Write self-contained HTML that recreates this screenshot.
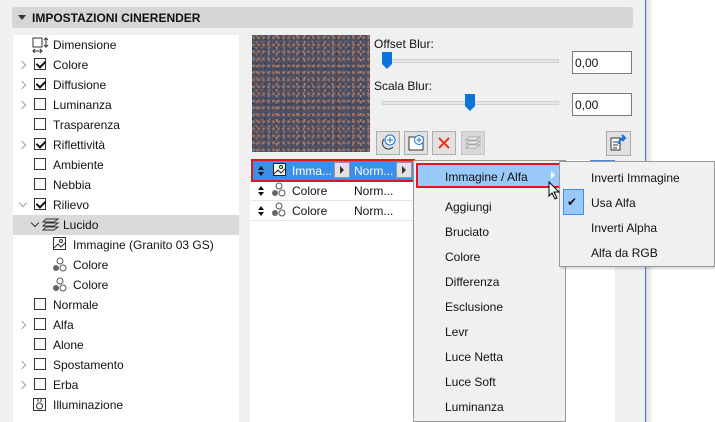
<!DOCTYPE html>
<html><head><meta charset="utf-8"><style>
*{box-sizing:border-box;margin:0;padding:0}
body{width:715px;height:422px;overflow:hidden;background:#f0f0f0;font-family:"Liberation Sans",sans-serif;font-size:12px;color:#111;position:relative}
.a{position:absolute}
.t{position:absolute;white-space:nowrap;line-height:14px}
.cb{position:absolute;width:12px;height:12px;border:1px solid #333;background:#fff}
.cb.on::after{content:"";position:absolute;left:3px;top:0px;width:4px;height:7px;border:solid #111;border-width:0 2px 2px 0;transform:rotate(45deg)}
.chev{position:absolute;width:6px;height:6px;border:solid #a0a0a0;border-width:1.5px 1.5px 0 0;transform:rotate(45deg)}
.dn{transform:rotate(135deg)}
.mi{position:absolute;left:445px;font-size:12px}
.srt{position:absolute;width:6px;height:10px}
.srt::before{content:"";position:absolute;left:0;top:0;border-left:3px solid transparent;border-right:3px solid transparent;border-bottom:4px solid #111}
.srt::after{content:"";position:absolute;left:0;top:6px;border-left:3px solid transparent;border-right:3px solid transparent;border-top:4px solid #111}
.srt.w::before{border-bottom-color:#fff}.srt.w::after{border-top-color:#fff}
</style></head><body>
<div class="a" style="left:645px;top:0;width:1px;height:422px;background:#3a7bd5"></div>
<div class="a" style="left:646px;top:0;width:69px;height:422px;background:#fff"></div>
<div class="a" style="left:646px;top:0;width:8px;height:422px;background:linear-gradient(90deg,#ddd,#fff)"></div>
<div class="a" style="left:12px;top:7px;width:621px;height:21px;background:#d6d6d6;border-radius:3px"></div>
<div class="a" style="left:18px;top:15px;border-left:4px solid transparent;border-right:4px solid transparent;border-top:5px solid #333"></div>
<div class="t" style="left:32px;top:11px;font-weight:bold;font-size:12px">IMPOSTAZIONI CINERENDER</div>
<div class="a" style="left:13px;top:35px;width:226px;height:387px;background:#fff"></div>
<div class="a" style="left:13px;top:215px;width:226px;height:20px;background:#dadada"></div>
<svg class="a" style="left:32px;top:37px" width="18" height="16"><rect x="1" y="1" width="9" height="9" fill="none" stroke="#333"/><path d="M14 1v9M12 3l2-2 2 2M12 8l2 2 2-2M1 14h9M3 12l-2 2 2 2M8 12l2 2-2 2" stroke="#333" fill="none"/></svg>
<div class="t" style="left:53px;top:38px">Dimensione</div>
<div class="chev" style="left:19px;top:62px"></div><div class="cb on" style="left:34px;top:58px"></div><div class="t" style="left:53px;top:58px">Colore</div>
<div class="chev" style="left:19px;top:82px"></div><div class="cb on" style="left:34px;top:78px"></div><div class="t" style="left:53px;top:78px">Diffusione</div>
<div class="chev" style="left:19px;top:102px"></div><div class="cb" style="left:34px;top:98px"></div><div class="t" style="left:53px;top:98px">Luminanza</div>
<div class="cb" style="left:34px;top:118px"></div><div class="t" style="left:53px;top:118px">Trasparenza</div>
<div class="chev" style="left:19px;top:142px"></div><div class="cb on" style="left:34px;top:138px"></div><div class="t" style="left:53px;top:138px">Riflettività</div>
<div class="cb" style="left:34px;top:158px"></div><div class="t" style="left:53px;top:158px">Ambiente</div>
<div class="cb" style="left:34px;top:178px"></div><div class="t" style="left:53px;top:178px">Nebbia</div>
<div class="chev dn" style="left:20px;top:200px"></div><div class="cb on" style="left:34px;top:198px"></div><div class="t" style="left:53px;top:198px">Rilievo</div>
<div class="chev dn" style="left:32px;top:220px;border-color:#333"></div>
<svg class="a" style="left:42px;top:217px" width="18" height="16"><path d="M4 2h12l-4 3H1zM4 6h12l-4 3H1zM4 10h12l-4 3H1z" fill="none" stroke="#333"/></svg>
<div class="t" style="left:63px;top:218px">Lucido</div>
<svg class="a" style="left:53px;top:237px" width="14" height="14"><rect x="0.5" y="0.5" width="12" height="12" fill="none" stroke="#333"/><path d="M1 11l4-4 3 3 4-4" stroke="#333" fill="none"/><circle cx="8" cy="4" r="1.5" fill="none" stroke="#333"/></svg>
<div class="t" style="left:73px;top:238px">Immagine (Granito 03 GS)</div>
<svg class="a" style="left:52px;top:257px" width="16" height="16"><circle cx="8" cy="4" r="3" fill="none" stroke="#555"/><circle cx="4" cy="11" r="3" fill="#666"/><circle cx="11" cy="11" r="3" fill="none" stroke="#555"/></svg>
<div class="t" style="left:73px;top:258px">Colore</div>
<svg class="a" style="left:52px;top:277px" width="16" height="16"><circle cx="8" cy="4" r="3" fill="none" stroke="#555"/><circle cx="4" cy="11" r="3" fill="#666"/><circle cx="11" cy="11" r="3" fill="none" stroke="#555"/></svg>
<div class="t" style="left:73px;top:278px">Colore</div>
<div class="cb" style="left:34px;top:298px"></div><div class="t" style="left:53px;top:298px">Normale</div>
<div class="chev" style="left:19px;top:322px"></div><div class="cb" style="left:34px;top:318px"></div><div class="t" style="left:53px;top:318px">Alfa</div>
<div class="cb" style="left:34px;top:338px"></div><div class="t" style="left:53px;top:338px">Alone</div>
<div class="chev" style="left:19px;top:362px"></div><div class="cb" style="left:34px;top:358px"></div><div class="t" style="left:53px;top:358px">Spostamento</div>
<div class="chev" style="left:19px;top:382px"></div><div class="cb" style="left:34px;top:378px"></div><div class="t" style="left:53px;top:378px">Erba</div>
<svg class="a" style="left:33px;top:396px" width="14" height="16"><rect x="0.5" y="2.5" width="12" height="12" fill="none" stroke="#333"/><circle cx="6.5" cy="10" r="3" fill="none" stroke="#333"/><path d="M5 2v4M8 2v4" stroke="#333"/></svg>
<div class="t" style="left:53px;top:398px">Illuminazione</div>
<div class="a" style="left:252px;top:35px;width:118px;height:117px;background:#5e5058;background-image:radial-gradient(circle at 30% 40%,#9a7264 0 1px,transparent 2px),radial-gradient(circle at 70% 60%,#45506a 0 1px,transparent 2px),radial-gradient(circle at 50% 20%,#b08474 0 1px,transparent 2px),radial-gradient(circle at 20% 80%,#3c3a48 0 1px,transparent 2px);background-size:5px 7px,4px 3px,7px 6px,3px 5px"></div>
<div class="t" style="left:374px;top:37px">Offset Blur:</div>
<div class="a" style="left:382px;top:59px;width:177px;height:4px;background:#e6e6e6;border:1px solid #d0d0d0"></div>
<svg class="a" style="left:382px;top:52px" width="11" height="18"><path d="M0 0h10v12l-5 5-5-5z" fill="#0a74da"/></svg>
<div class="a" style="left:572px;top:51px;width:60px;height:23px;background:#fff;border:1px solid #7a7a7a"></div>
<div class="t" style="left:575px;top:56px">0,00</div>
<div class="t" style="left:374px;top:79px">Scala Blur:</div>
<div class="a" style="left:382px;top:101px;width:177px;height:4px;background:#e6e6e6;border:1px solid #d0d0d0"></div>
<svg class="a" style="left:465px;top:94px" width="11" height="18"><path d="M0 0h10v12l-5 5-5-5z" fill="#0a74da"/></svg>
<div class="a" style="left:572px;top:93px;width:60px;height:23px;background:#fff;border:1px solid #7a7a7a"></div>
<div class="t" style="left:575px;top:98px">0,00</div>
<div class="a" style="left:376px;top:131px;width:24px;height:24px;border:1px solid #adadad;background:#e1e1e1"></div>
<svg class="a" style="left:380px;top:134px" width="18" height="18"><circle cx="10" cy="6" r="5" fill="#fff" stroke="#1a6fd4"/><path d="M10 3v6M7 6h6" stroke="#1a6fd4"/><path d="M4 5a6 6 0 1 0 9 8" fill="none" stroke="#333"/></svg>
<div class="a" style="left:404px;top:131px;width:24px;height:24px;border:1px solid #adadad;background:#e1e1e1"></div>
<svg class="a" style="left:408px;top:134px" width="18" height="18"><rect x="1" y="3" width="14" height="13" fill="#fff" stroke="#333"/><circle cx="11" cy="6" r="4.5" fill="#fff" stroke="#1a6fd4"/><path d="M11 3.5v5M8.5 6h5" stroke="#1a6fd4"/></svg>
<div class="a" style="left:432px;top:131px;width:24px;height:24px;border:1px solid #adadad;background:#e1e1e1"></div>
<svg class="a" style="left:437px;top:136px" width="14" height="14"><path d="M2 2l10 10M12 2L2 12" stroke="#e8391e" stroke-width="2"/></svg>
<div class="a" style="left:461px;top:131px;width:24px;height:24px;border:1px solid #c8c8c8;background:#d8d8d8"></div>
<svg class="a" style="left:465px;top:135px" width="16" height="16"><path d="M4 2h11l-4 3H1zM4 6h11l-4 3H1zM4 10h11l-4 3H1z" fill="#eee" stroke="#aaa"/></svg>
<div class="a" style="left:606px;top:131px;width:25px;height:25px;border:1px solid #adadad;background:#e1e1e1"></div>
<svg class="a" style="left:610px;top:134px" width="18" height="18"><path d="M1 4h9v12H1z" fill="#fff" stroke="#333"/><path d="M3 8h5M3 11h5M3 14h4" stroke="#333"/><path d="M9 10q0-6 6-6M12 1l3 3-3 3" fill="none" stroke="#1a6fd4" stroke-width="2"/></svg>
<div class="a" style="left:250px;top:160px;width:365px;height:262px;background:#fff"></div>
<div class="a" style="left:590px;top:160px;width:25px;height:2px;background:#3d8ee8"></div>
<div class="a" style="left:251px;top:180px;width:162px;height:1px;background:#e5e5e5"></div>
<div class="a" style="left:251px;top:200px;width:162px;height:1px;background:#e5e5e5"></div>
<div class="a" style="left:251px;top:220px;width:162px;height:1px;background:#e5e5e5"></div>
<div class="a" style="left:253px;top:161px;width:160px;height:19px;background:#3d8ee8"></div>
<div class="a" style="left:251px;top:159px;width:164px;height:23px;border:2px solid #e3141c"></div>
<div class="srt" style="left:258px;top:166px"></div>
<svg class="a" style="left:273px;top:163px" width="14" height="14"><rect x="0.5" y="0.5" width="12" height="12" fill="#fff" stroke="#222"/><path d="M1 11l4-4 3 3 4-4" stroke="#222" fill="none"/><circle cx="8" cy="4" r="1.5" fill="none" stroke="#222"/></svg>
<div class="t" style="left:292px;top:164px;color:#fff">Imma...</div>
<div class="a" style="left:334px;top:162px;width:16px;height:16px;background:#e1e1e1;border:1px solid #999"></div>
<div class="a" style="left:340px;top:166px;border-top:4px solid transparent;border-bottom:4px solid transparent;border-left:4px solid #333"></div>
<div class="t" style="left:354px;top:164px;color:#fff">Norm...</div>
<div class="a" style="left:396px;top:162px;width:16px;height:16px;background:#e1e1e1;border:1px solid #999"></div>
<div class="a" style="left:402px;top:166px;border-top:4px solid transparent;border-bottom:4px solid transparent;border-left:4px solid #333"></div>
<div class="srt" style="left:258px;top:186px"></div>
<svg class="a" style="left:271px;top:182px" width="16" height="16"><circle cx="8" cy="4" r="3" fill="none" stroke="#555"/><circle cx="4" cy="11" r="3" fill="#666"/><circle cx="11" cy="11" r="3" fill="none" stroke="#555"/></svg>
<div class="t" style="left:292px;top:184px">Colore</div><div class="t" style="left:354px;top:184px">Norm...</div>
<div class="srt" style="left:258px;top:206px"></div>
<svg class="a" style="left:271px;top:202px" width="16" height="16"><circle cx="8" cy="4" r="3" fill="none" stroke="#555"/><circle cx="4" cy="11" r="3" fill="#666"/><circle cx="11" cy="11" r="3" fill="none" stroke="#555"/></svg>
<div class="t" style="left:292px;top:204px">Colore</div><div class="t" style="left:354px;top:204px">Norm...</div>
<div class="a" style="left:615px;top:160px;width:30px;height:262px;background:#f0f0f0"></div>
<div class="a" style="left:413px;top:160px;width:153px;height:262px;background:#f0f0f0;border:1px solid #999"></div>
<div class="a" style="left:416px;top:163px;width:145px;height:25px;background:#99c9f9;border:2px solid #e3141c"></div>
<div class="mi t" style="top:170px">Immagine / Alfa</div>
<div class="a" style="left:551px;top:171px;border-top:4px solid transparent;border-bottom:4px solid transparent;border-left:4px solid #fff"></div>
<div class="mi t" style="top:200px">Aggiungi</div>
<div class="mi t" style="top:225px">Bruciato</div>
<div class="mi t" style="top:250px">Colore</div>
<div class="mi t" style="top:275px">Differenza</div>
<div class="mi t" style="top:300px">Esclusione</div>
<div class="mi t" style="top:325px">Levr</div>
<div class="mi t" style="top:350px">Luce Netta</div>
<div class="mi t" style="top:375px">Luce Soft</div>
<div class="mi t" style="top:400px">Luminanza</div>
<div class="a" style="left:559px;top:161px;width:156px;height:106px;background:#f0f0f0;border:1px solid #999;box-shadow:2px 2px 2px rgba(0,0,0,.15)"></div>
<div class="a" style="left:563px;top:189px;width:21px;height:26px;background:#99c9f9;border:1px solid #3d8ee8"></div>
<div class="t" style="left:567px;top:195px;font-size:12px">✔</div>
<div class="t" style="left:591px;top:171px">Inverti Immagine</div>
<div class="t" style="left:591px;top:196px">Usa Alfa</div>
<div class="t" style="left:591px;top:221px">Inverti Alpha</div>
<div class="t" style="left:591px;top:246px">Alfa da RGB</div>
<svg class="a" style="left:548px;top:181px" width="14" height="20"><path d="M1 1v14l3-3 3 6 2-1-3-6h5z" fill="#fff" stroke="#000"/></svg>
</body></html>
